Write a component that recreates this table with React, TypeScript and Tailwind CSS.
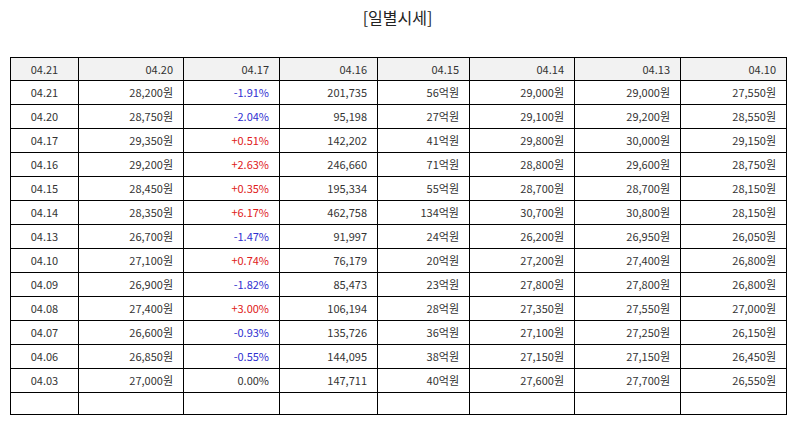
const headers = ["04.21", "04.20", "04.17", "04.16", "04.15", "04.14", "04.13", "04.10"];

const rows = [
  ["04.21", "28,200원", "-1.91%", "201,735", "56억원", "29,000원", "29,000원", "27,550원"],
  ["04.20", "28,750원", "-2.04%", "95,198", "27억원", "29,100원", "29,200원", "28,550원"],
  ["04.17", "29,350원", "+0.51%", "142,202", "41억원", "29,800원", "30,000원", "29,150원"],
  ["04.16", "29,200원", "+2.63%", "246,660", "71억원", "28,800원", "29,600원", "28,750원"],
  ["04.15", "28,450원", "+0.35%", "195,334", "55억원", "28,700원", "28,700원", "28,150원"],
  ["04.14", "28,350원", "+6.17%", "462,758", "134억원", "30,700원", "30,800원", "28,150원"],
  ["04.13", "26,700원", "-1.47%", "91,997", "24억원", "26,200원", "26,950원", "26,050원"],
  ["04.10", "27,100원", "+0.74%", "76,179", "20억원", "27,200원", "27,400원", "26,800원"],
  ["04.09", "26,900원", "-1.82%", "85,473", "23억원", "27,800원", "27,800원", "26,800원"],
  ["04.08", "27,400원", "+3.00%", "106,194", "28억원", "27,350원", "27,550원", "27,000원"],
  ["04.07", "26,600원", "-0.93%", "135,726", "36억원", "27,100원", "27,250원", "26,150원"],
  ["04.06", "26,850원", "-0.55%", "144,095", "38억원", "27,150원", "27,150원", "26,450원"],
  ["04.03", "27,000원", "0.00%", "147,711", "40억원", "27,600원", "27,700원", "26,550원"],
];

const widths = ["w-[68px]", "w-[105px]", "w-[96px]", "w-[98px]", "w-[92px]", "w-[105px]", "w-[106px]", "w-[106px]"];

function rateColor(v: string) {
  if (v.startsWith("+")) return "text-[#e02020]";
  if (v.startsWith("-")) return "text-[#3030d0]";
  return "text-[#333]";
}

export default function App() {
  return (
    <div className="w-[795px] h-[425px] bg-white font-['Noto_Sans_CJK_KR','Noto_Sans',sans-serif] text-[#333]">
      <h1 className="pt-[5px] h-[57px] text-center text-[16px] leading-[24px] text-[#222]">[일별시세]</h1>
      <table className="ml-[10px] w-[777px] table-fixed border-collapse text-[11px]">
        <colgroup>
          {widths.map((w, i) => (
            <col key={i} className={w} />
          ))}
        </colgroup>
        <thead>
          <tr className="h-[23px] bg-[#f2f2f2]">
            {headers.map((h, i) => (
              <th
                key={i}
                className={`border border-black font-normal px-[10px] ${i === 0 ? "text-center" : "text-right"}`}
              >
                {h}
              </th>
            ))}
          </tr>
        </thead>
        <tbody>
          {rows.map((r, ri) => (
            <tr key={ri} className="h-[24px]">
              {r.map((c, ci) => (
                <td
                  key={ci}
                  className={`border border-black px-[10px] ${ci === 0 ? "text-center" : "text-right"} ${ci === 2 ? rateColor(c) : ""}`}
                >
                  {c}
                </td>
              ))}
            </tr>
          ))}
          <tr className="h-[22px]">
            {headers.map((_, i) => (
              <td key={i} className="border border-black" />
            ))}
          </tr>
        </tbody>
      </table>
    </div>
  );
}
